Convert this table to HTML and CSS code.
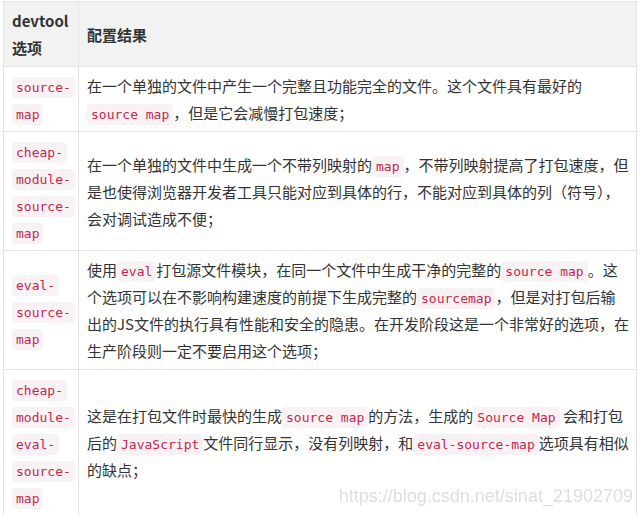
FILE: index.html
```html
<!DOCTYPE html>
<html lang="zh-CN">
<head>
    <meta charset="UTF-8">
    <meta name="viewport" content="width=device-width, initial-scale=1.0">
    <title>devtool 选项</title>
    <link rel="stylesheet" href="styles.css">
</head>
<body>
    <div class="article">
        <table class="devtool-table">
            <colgroup>
                <col class="col-option">
                <col>
            </colgroup>
            <thead>
                <tr>
                    <th>devtool选项</th>
                    <th>配置结果</th>
                </tr>
            </thead>
            <tbody>
                <tr>
                    <td><code>source-map</code></td>
                    <td>在一个单独的文件中产生一个完整且功能完全的文件。这个文件具有最好的<code>source map</code>，但是它会减慢打包速度；</td>
                </tr>
                <tr>
                    <td><code>cheap-module-source-map</code></td>
                    <td>在一个单独的文件中生成一个不带列映射的<code>map</code>，不带列映射提高了打包速度，但是也使得浏览器开发者工具只能对应到具体的行，不能对应到具体的列（符号），会对调试造成不便；</td>
                </tr>
                <tr>
                    <td><code>eval-source-map</code></td>
                    <td>使用<code>eval</code>打包源文件模块，在同一个文件中生成干净的完整的<code>source map</code>。这个选项可以在不影响构建速度的前提下生成完整的<code>sourcemap</code>，但是对打包后输出的JS文件的执行具有性能和安全的隐患。在开发阶段这是一个非常好的选项，在生产阶段则一定不要启用这个选项；</td>
                </tr>
                <tr>
                    <td><code>cheap-module-eval-source-map</code></td>
                    <td>这是在打包文件时最快的生成<code>source map</code>的方法，生成的<code>Source Map</code> 会和打包后的<code>JavaScript</code>文件同行显示，没有列映射，和<code>eval-source-map</code>选项具有相似的缺点；</td>
                </tr>
            </tbody>
        </table>
    </div>

    <div class="watermark">https://blog.csdn.net/sinat_21902709</div>
</body>
</html>
```

FILE: styles.css
```css
body {
    margin: 0;
    font-family: "Noto Sans CJK SC", sans-serif;
    font-size: 15px;
    color: #333;
    background: #fff;
}
.article {
    padding: 1px 4px 0 3px;
}
.devtool-table {
    width: 100%;
    border-collapse: collapse;
    table-layout: fixed;
}
.col-option {
    width: 75px;
}
th, td {
    border: 1px solid #e4e4e4;
    padding: 5px 7px 5px 8px;
    line-height: 27px;
    text-align: left;
    vertical-align: middle;
}
th {
    background: #f2f2f2;
    font-weight: bold;
}
code {
    font-family: "DejaVu Sans Mono", monospace;
    font-size: 13px;
    line-height: 1;
    color: #c7254e;
    background: #f9f2f4;
    padding: 3px 4px;
    border-radius: 4px;
    -webkit-box-decoration-break: clone;
    box-decoration-break: clone;
}
.watermark {
    position: fixed;
    right: 8px;
    bottom: 8px;
    font-family: "Liberation Sans", Arial, sans-serif;
    font-size: 18px;
    color: #dedede;
}
```
